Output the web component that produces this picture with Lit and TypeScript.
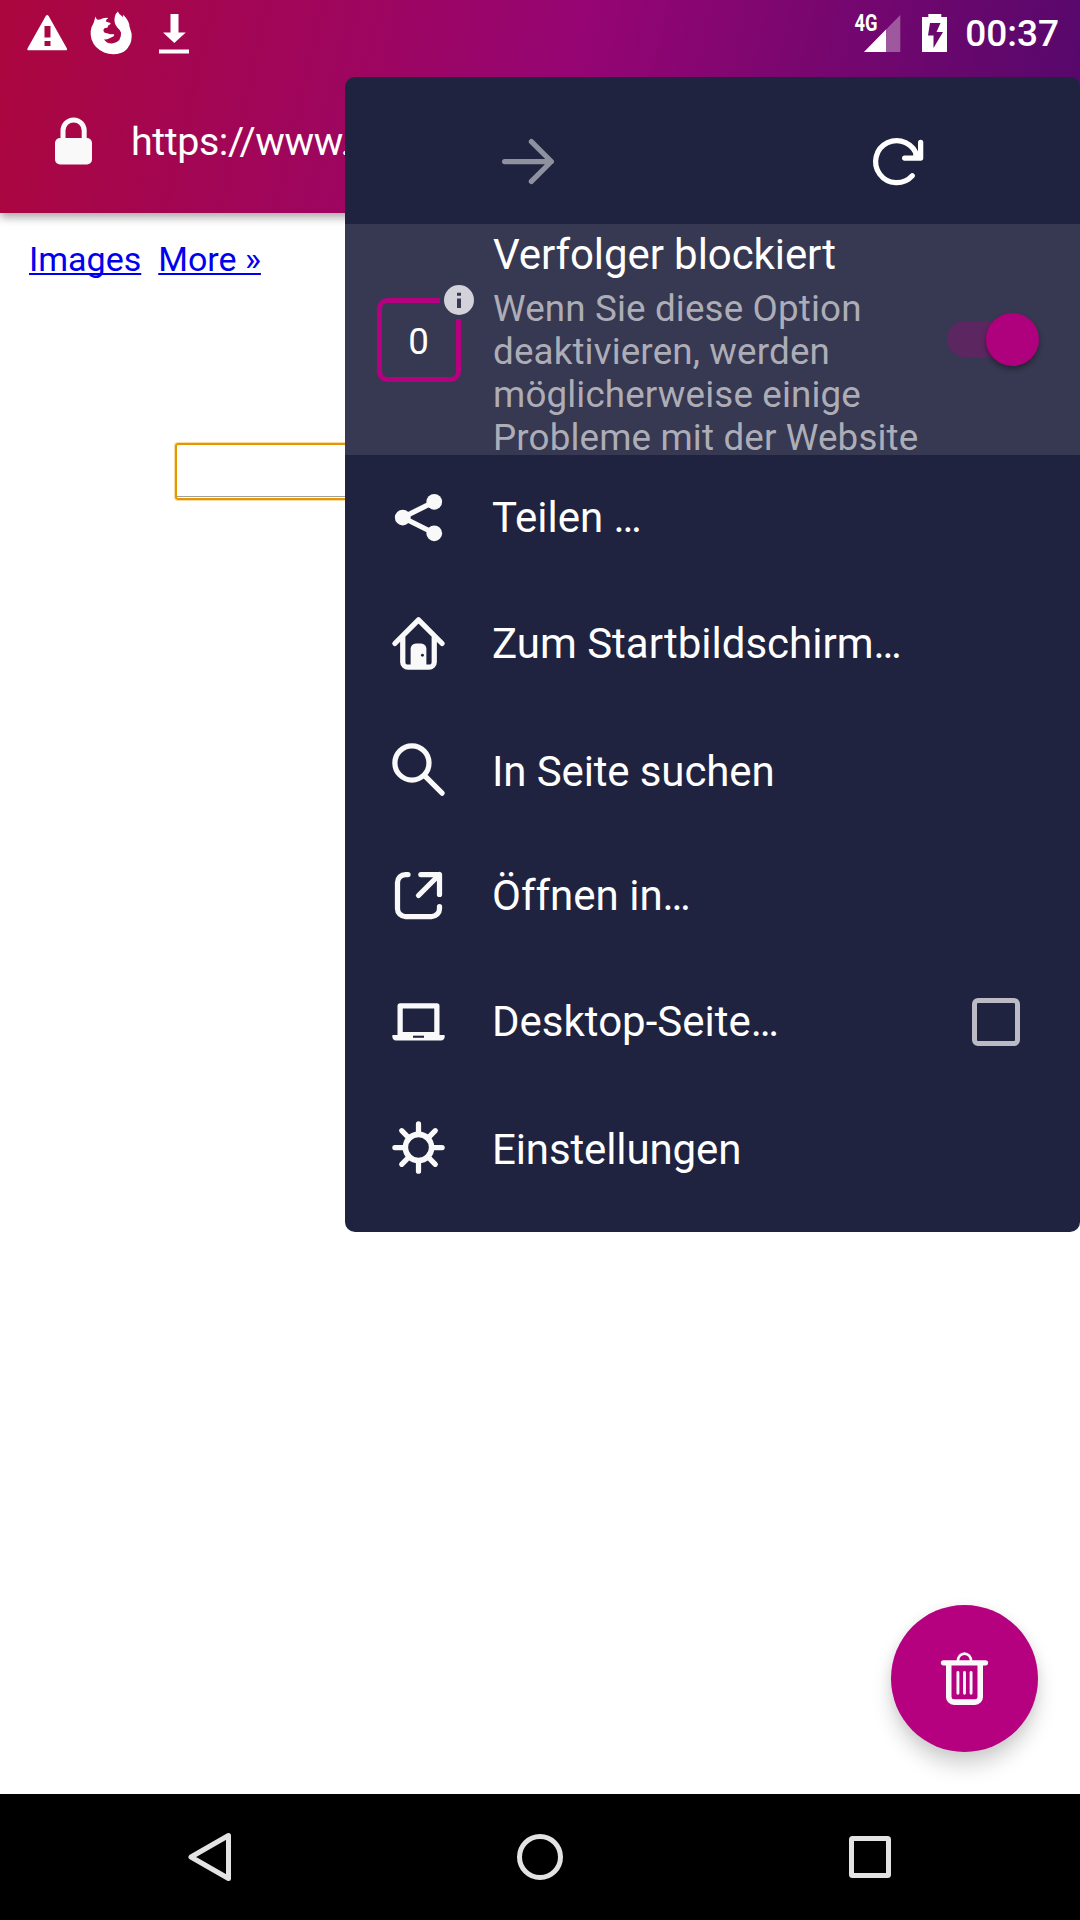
import { LitElement, html, css, svg, nothing } from "lit";
import { customElement, state } from "lit/decorators.js";

const glyphs = {
  share: svg`<path d="M6 12 18 6M6 12l12 6" stroke-width="2"/><g fill="currentColor" stroke="none"><circle cx="6" cy="12" r="3"/><circle cx="18" cy="6" r="3"/><circle cx="18" cy="18" r="3"/></g>`,
  home: svg`<path d="M3 12 12 3l9 9M6 9.6V19a2 2 0 0 0 2 2h8a2 2 0 0 0 2-2V9.6" stroke-width="2"/><path d="M9 20.6V14a2 2 0 0 1 2-2h2a2 2 0 0 1 2 2v6.6z" fill="currentColor" stroke="none"/><circle cx="13.5" cy="16.5" r=".55" fill="#20233f" stroke="none"/>`,
  search: svg`<circle cx="9.5" cy="9.5" r="6.5" stroke-width="2"/><path d="m14.3 14.3 6.7 6.7" stroke-width="2"/>`,
  open: svg`<path d="M8 4H7a3 3 0 0 0-3 3v10a3 3 0 0 0 3 3h10a3 3 0 0 0 3-3v-.8M12.9 4H20v7.6M20 4l-8 8" stroke-width="2"/>`,
  desktop: svg`<path d="M5 17V6h14v11z" stroke-width="2"/><path d="M2.3 17.100h19.400q.3 0 .3.3 0 1.800-1.500 1.800h-17Q2 19.200 2 17.400q0-.3.3-.3z" fill="currentColor" stroke="none"/><path d="M9.900 17.800h4.200" stroke="#20233f" stroke-width=".8" stroke-linecap="butt"/>`,
  settings: svg`<circle cx="12" cy="12" r="5" stroke-width="2.100"/><path d="M12 3v4M12 17v4M3 12h4M17 12h4M5.600 5.600l2.900 2.900M15.500 15.500l2.900 2.900M5.600 18.400l2.900-2.900M15.500 8.500l2.900-2.900" stroke-width="2"/>`,
  forward: svg`<path d="M2.900 12H20.700M13.100 4.400 20.700 12l-7.600 7.600" stroke-width="2"/>`,
  reload: svg`<path d="M18 17.400A8 8 0 1 1 19.800 10.100" stroke-width="2"/><path d="M21.200 4.700v6h-6.100" stroke-width="2"/><path d="M18.700 8.200 21.200 8.700v2h-3z" fill="currentColor" stroke="none"/>`,
  trash: svg`<path d="M4 6h16" stroke-width="2"/><path d="M6 6.500V19a2 2 0 0 0 2 2h8a2 2 0 0 0 2-2V6.500" stroke-width="2.100"/><path d="M9.500 5.300a2.500 2.800 0 0 1 5 0" stroke-width="1"/><path d="M9.500 9.700v7.900M12 9.700v7.900M14.500 9.700v7.900" stroke-width="1.100"/>`,
};
type Glyph = keyof typeof glyphs;

const icon = (name: Glyph) => html`
  <svg class="icon" viewBox="0 0 24 24" fill="none" stroke="currentColor" stroke-linecap="round" stroke-linejoin="round">
    ${glyphs[name]}
  </svg>`;

interface Entry {
  glyph: Glyph;
  label: string;
  low?: boolean;
  checkable?: boolean;
}

const ENTRIES: Entry[] = [
  { glyph: "share", label: "Teilen …" },
  { glyph: "home", label: "Zum Startbildschirm…" },
  { glyph: "search", label: "In Seite suchen", low: true },
  { glyph: "open", label: "Öffnen in…" },
  { glyph: "desktop", label: "Desktop-Seite…", checkable: true },
  { glyph: "settings", label: "Einstellungen", low: true },
];

@customElement("browser-menu")
class BrowserMenu extends LitElement {
  @state() private desktop = false;

  static styles = css`
    :host {
      display: block;
      width: 735px;
      height: 1155px;
      box-sizing: border-box;
      padding-top: 21px;
      border-radius: 10px;
      overflow: hidden;
      background: #20233f;
      color: #fff;
      font-family: Roboto, "Noto Sans", sans-serif;
    }
    .icon { width: 63px; height: 63px; flex: none; display: block; color: #f9f9fa; }
    .actions { display: grid; grid-template-columns: 1fr 1fr; height: 126px; place-items: center; }
    .actions .icon { color: #fff; }
    .actions .off { opacity: 0.5; }
    .tracking {
      display: flex;
      height: 231px;
      box-sizing: border-box;
      padding-left: 32px;
      background: #373851;
    }
    .counter { width: 100px; flex: none; padding-top: 66px; }
    .counter svg { display: block; overflow: visible; }
    .count { font-size: 36.75px; fill: #fff; }
    .copy { width: 439px; padding: 6px 0 0 16px; flex: none; }
    .title { font-size: 42px; line-height: 49px; white-space: nowrap; letter-spacing: -0.08px; }
    .hint { font-size: 36.75px; line-height: 43px; color: #adadb7; margin-top: 8px; white-space: nowrap; letter-spacing: 0.15px; }
    .switch { margin: 97px 0 0 15px; width: 92px; height: 36px; display: flex; align-items: center; justify-content: flex-end; border-radius: 18px; background: linear-gradient(90deg, #5c2660 0 70px, transparent 70px); }
    .knob { width: 53px; height: 53px; flex: none; border-radius: 50%; background: #af007d; box-shadow: 0 3px 5px rgba(0, 0, 0, 0.35); }
    .entry { display: flex; align-items: center; height: 126px; padding: 0 60px 0 42px; }
    .entry .icon { margin-bottom: 2px; }
    .label { margin-left: 42px; flex: 1; font-size: 42px; line-height: 50px; white-space: nowrap; }
    .low { padding-top: 4px; letter-spacing: -0.12px; }
    .box { width: 48px; height: 48px; box-sizing: border-box; border: 5px solid #bcbbc5; border-radius: 6px; }
    .box.on { background: #bcbbc5; }
  `;

  render() {
    return html`
      <div class="actions">
        <div class="off">${icon("forward")}</div>
        <div>${icon("reload")}</div>
      </div>
      <div class="tracking">
        <div class="counter">
          <svg width="100" height="100" viewBox="0 0 100 100">
            <path d="M63 10.500H10.500a8 8 0 0 0-8 8V81.500a8 8 0 0 0 8 8H73.500a8 8 0 0 0 8-8V29" fill="none" stroke="#b5007f" stroke-width="5" />
            <circle cx="82" cy="10" r="15" fill="#d3d2da" />
            <path d="M80 2.800h4v3h-4zM80 8.500h4v9.500h-4z" fill="#373851" />
            <text class="count" x="41.500" y="64" text-anchor="middle">0</text>
          </svg>
        </div>
        <div class="copy">
          <div class="title">Verfolger blockiert</div>
          <div class="hint">
            Wenn Sie diese Option<br />deaktivieren, werden<br />möglicherweise einige<br />Probleme mit der Website
          </div>
        </div>
        <div class="switch"><div class="knob"></div></div>
      </div>
      ${ENTRIES.map(
        (e) => html`
          <div class="entry" @click=${() => e.checkable && (this.desktop = !this.desktop)}>
            ${icon(e.glyph)}
            <span class="label ${e.low ? "low" : ""}">${e.label}</span>
            ${e.checkable ? html`<span class="box ${this.desktop ? "on" : ""}"></span>` : nothing}
          </div>
        `
      )}
    `;
  }
}

@customElement("app-root")
class AppRoot extends LitElement {
  static styles = css`
    :host {
      display: flex;
      flex-direction: column;
      position: relative;
      width: 1080px;
      height: 1920px;
      overflow: hidden;
      background: #fff;
      font-family: Roboto, "Noto Sans", sans-serif;
    }
    .top {
      height: 213px;
      flex: none;
      color: #fff;
      background: linear-gradient(103deg, #ad063e 0%, #a6064a 12%, #960573 52%, #53086b 100%);
      box-shadow: 0 4px 9px rgba(0, 0, 0, 0.36);
    }
    .status { display: flex; align-items: flex-start; height: 63px; }
    .status svg { display: block; flex: none; }
    .spacer { flex: 1; }
    .clock { font-size: 37px; font-weight: 500; line-height: 44px; padding: 12px 21px 0 17px; }
    .net { font-size: 23px; font-weight: 700; fill: #fff; }
    .address { display: flex; align-items: center; height: 155px; box-sizing: border-box; padding: 0 0 0 55px; }
    .url { font-size: 39.4px; line-height: 46px; margin-left: 39px; padding-top: 2px; letter-spacing: -0.42px; }
    .page { flex: 1; min-height: 0; }
    .links { display: flex; gap: 17px; padding: 25px 0 0 29px; font-size: 34px; line-height: 42px; color: #0000ee; height: 205px; box-sizing: content-box; }
    .links a { color: #0000ee; text-decoration: underline; text-decoration-thickness: 2px; text-underline-offset: 2px; text-decoration-skip-ink: none; height: 42px; }
    .query { margin-left: 175px; width: 730px; height: 57px; box-sizing: border-box; border: 2px solid #e59700; border-radius: 3px; box-shadow: 0 0 0 1px rgba(229, 151, 0, 0.35); display: flex; align-items: flex-end; }
    .query i { flex: 1; height: 1px; background: #a0a0a0; margin-bottom: 1px; }
    .nav { height: 126px; flex: none; background: #000; }
    .nav svg { display: block; }
    browser-menu { position: absolute; left: 345px; top: 77px; }
    .fab {
      position: absolute; right: 42px; bottom: 168px; width: 147px; height: 147px; border-radius: 50%;
      background: #b5007f; color: #f9f9fa; display: grid; place-items: center;
      box-shadow: 0 14px 20px rgba(0, 0, 0, 0.17), 0 1px 12px rgba(0, 0, 0, 0.07);
    }
    .icon { width: 63px; height: 63px; display: block; }
  `;

  render() {
    return html`
      <div class="top">
        <div class="status">
          <svg width="200" height="63" fill="#fff">
            <path fill-rule="evenodd" d="M45.900 15.800q1.300-1.800 2.600 0L66.800 48.200q.900 2-1 2H28.600q-1.900 0-1-2zM44.500 26v11.500h6V26zM44.500 41v5h6v-5z" />
            <path d="M95.500 16.500q.5 2.200 2 3.200 1.500 0 2.600-.1 3.500-2.200 8.200-1.600-2.200 1.200-2.500 3.400l4.600 1.500q.9 1-2.200 2.600l-.8 2.200q-3.900-.5-4 3.200 1 2.500 4 2.300 2.600 1.700 6 .8 1.700.9.2 2.200-2.800 1.200-4.600 2.300-3 1.300-5.200.7 3.300 5 9.500 4.100 8.500-2 7.700-10.800-.6-2.300-3.500-4.800-4-4.500-2.800-10.500.8-3.900 3.200-5.700 1.200 3.300 4 4.600l1 1.200.4-2.500q6.200 6.500 6.200 11.800l2.100 6.800q.6 8-2.700 12.600-1.800 4.500-8 7-8.500 2.600-16.800-.5-9.500-4-12.500-12.900-2.700-9.500 2-16.700z" />
            <path d="M170.500 14h8v18.500h7.300L174.300 43 163 32.500h7.500zM159 49.500h30v4h-30z" />
          </svg>
          <span class="spacer"></span>
          <svg width="94" height="63" viewBox="854 0 94 63" fill="#fff">
            <path d="M900.300 15v37H864z" opacity=".33" />
            <path d="M886 29.600V52h-22z" />
            <text class="net" x="854.500" y="31" textLength="23" lengthAdjust="spacingAndGlyphs">4G</text>
            <path fill-rule="evenodd" d="M928.300 14h13v3h5.700v35h-25V17h6.300zM930 23l-2 12.500h5.500V48L943 32h-6.500l4-9z" />
          </svg>
          <span class="clock">00:37</span>
        </div>
        <div class="address">
          <svg width="37" height="48" viewBox="0 0 37 48">
            <path d="M8 24V13.500a10.600 10.600 0 0 1 21.200 0V24" fill="none" stroke="#f9f9fa" stroke-width="5" />
            <rect y="21" width="37" height="26.500" rx="5" fill="#f9f9fa" />
          </svg>
          <span class="url">https://www.</span>
        </div>
      </div>
      <div class="page">
        <div class="links"><a>Images</a><a>More »</a></div>
        <div class="query"><i></i></div>
      </div>
      <div class="nav">
        <svg width="1080" height="126" fill="none" stroke="#e3e3e3" stroke-width="5" stroke-linejoin="round">
          <path d="M228.500 41.500v43L191 63z" />
          <circle cx="540" cy="63" r="20.500" />
          <rect x="851.500" y="44.500" width="37" height="37" rx="1" />
        </svg>
      </div>
      <browser-menu></browser-menu>
      <div class="fab">${icon("trash")}</div>
    `;
  }
}
